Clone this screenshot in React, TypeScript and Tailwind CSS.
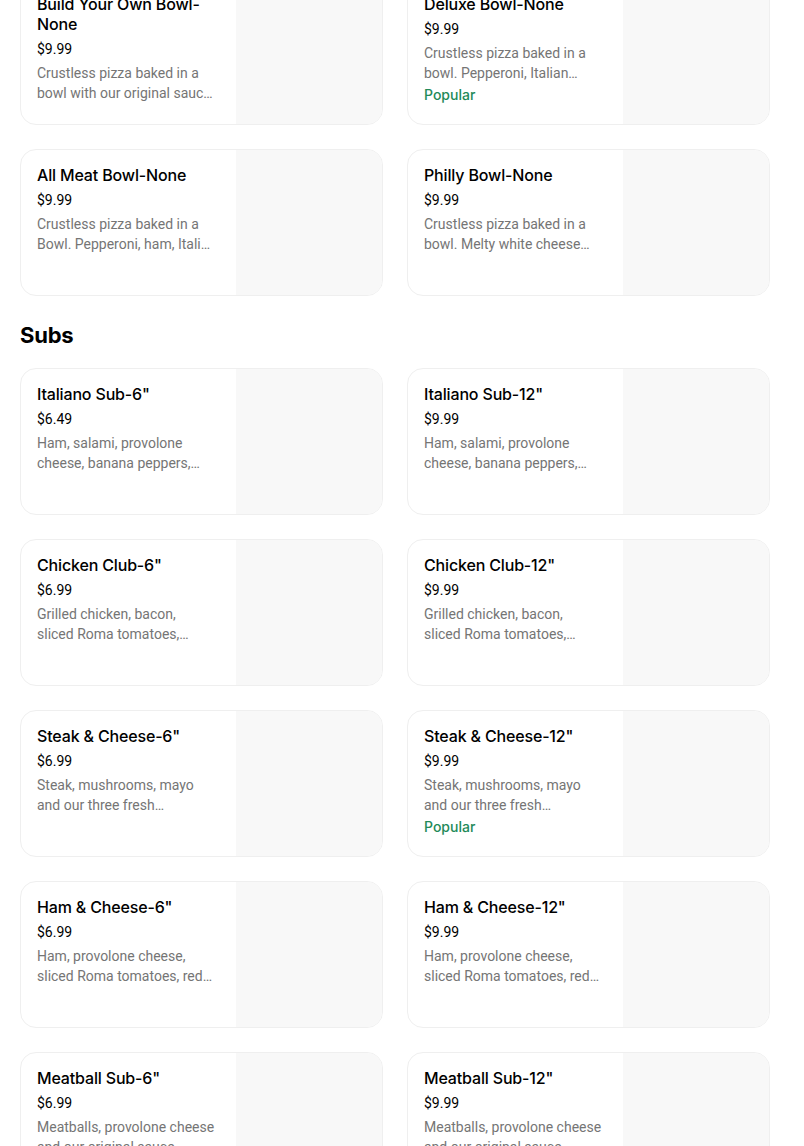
import React from "react";

type Item = {
  name: string;
  price: string;
  desc: [string, string];
  popular?: boolean;
};

// second description line is kept as it shows, cut with an ellipsis
const bowls: Item[] = [
  {
    name: "Build Your Own Bowl-None",
    price: "$9.99",
    desc: ["Crustless pizza baked in a", "bowl with our original sauc…"],
  },
  {
    name: "Deluxe Bowl-None",
    price: "$9.99",
    desc: ["Crustless pizza baked in a", "bowl. Pepperoni, Italian…"],
    popular: true,
  },
  {
    name: "All Meat Bowl-None",
    price: "$9.99",
    desc: ["Crustless pizza baked in a", "Bowl. Pepperoni, ham, Itali…"],
  },
  {
    name: "Philly Bowl-None",
    price: "$9.99",
    desc: ["Crustless pizza baked in a", "bowl. Melty white cheese…"],
  },
];

const subs: Item[] = [
  {
    name: 'Italiano Sub-6"',
    price: "$6.49",
    desc: ["Ham, salami, provolone", "cheese, banana peppers,…"],
  },
  {
    name: 'Italiano Sub-12"',
    price: "$9.99",
    desc: ["Ham, salami, provolone", "cheese, banana peppers,…"],
  },
  {
    name: 'Chicken Club-6"',
    price: "$6.99",
    desc: ["Grilled chicken, bacon,", "sliced Roma tomatoes,…"],
  },
  {
    name: 'Chicken Club-12"',
    price: "$9.99",
    desc: ["Grilled chicken, bacon,", "sliced Roma tomatoes,…"],
  },
  {
    name: 'Steak & Cheese-6"',
    price: "$6.99",
    desc: ["Steak, mushrooms, mayo", "and our three fresh…"],
  },
  {
    name: 'Steak & Cheese-12"',
    price: "$9.99",
    desc: ["Steak, mushrooms, mayo", "and our three fresh…"],
    popular: true,
  },
  {
    name: 'Ham & Cheese-6"',
    price: "$6.99",
    desc: ["Ham, provolone cheese,", "sliced Roma tomatoes, red…"],
  },
  {
    name: 'Ham & Cheese-12"',
    price: "$9.99",
    desc: ["Ham, provolone cheese,", "sliced Roma tomatoes, red…"],
  },
  {
    name: 'Meatball Sub-6"',
    price: "$6.99",
    desc: ["Meatballs, provolone cheese", "and our original sauce…"],
  },
  {
    name: 'Meatball Sub-12"',
    price: "$9.99",
    desc: ["Meatballs, provolone cheese", "and our original sauce…"],
  },
];

const MenuCard: React.FC<{ item: Item }> = ({ item }) => (
  <div className="flex h-[147px] overflow-hidden rounded-2xl border border-[#efefef] bg-white">
    <div className="flex min-w-0 flex-1 flex-col px-4 pt-[15px]">
      <div className="font-['Inter'] text-[16px] font-medium leading-5 tracking-[-0.01em] text-black">
        {item.name}
      </div>
      <div className="mt-[5px] text-[14px] leading-5 text-black">
        {item.price}
      </div>
      <div className="mt-1 text-[14px] leading-5 text-[#757575]">
        <div className="whitespace-nowrap">{item.desc[0]}</div>
        <div className="truncate">{item.desc[1]}</div>
      </div>
      {item.popular && (
        <div className="mt-[2px] font-['Inter'] text-[14px] font-medium leading-5 text-[#238a59]">
          Popular
        </div>
      )}
    </div>
    <div className="h-full w-[146px] shrink-0 bg-[#f8f8f8]" />
  </div>
);

const App: React.FC = () => {
  return (
    <div
      className="h-[1146px] overflow-hidden bg-white"
      style={{ fontFamily: "Roboto, 'Noto Sans', sans-serif" }}
    >
      <div className="ml-5 w-[750px]">
        <div className="-mt-[22px] grid grid-cols-2 gap-6">
          {bowls.map((item) => (
            <MenuCard key={item.name} item={item} />
          ))}
        </div>

        <h2 className="mb-[17px] mt-[23px] font-['Inter'] text-[22px] font-bold leading-8 tracking-[-0.01em] text-black">
          Subs
        </h2>
        <div className="grid grid-cols-2 gap-6">
          {subs.map((item) => (
            <MenuCard key={item.name} item={item} />
          ))}
        </div>
      </div>
    </div>
  );
};

export default App;
